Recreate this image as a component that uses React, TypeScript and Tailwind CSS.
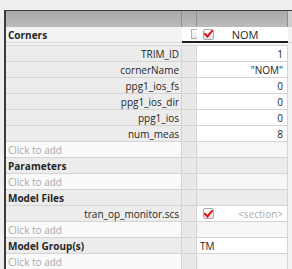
import React from "react";

type Row =
  | { kind: "prop"; label: string; value: string }
  | { kind: "add" }
  | { kind: "section"; label: string }
  | { kind: "file"; label: string }
  | { kind: "group"; label: string; value: string };

const rows: Row[] = [
  { kind: "prop", label: "TRIM_ID", value: "1" },
  { kind: "prop", label: "cornerName", value: "\"NOM\"" },
  { kind: "prop", label: "ppg1_ios_fs", value: "0" },
  { kind: "prop", label: "ppg1_ios_dir", value: "0" },
  { kind: "prop", label: "ppg1_ios", value: "0" },
  { kind: "prop", label: "num_meas", value: "8" },
  { kind: "add" },
  { kind: "section", label: "Parameters" },
  { kind: "add" },
  { kind: "section", label: "Model Files" },
  { kind: "file", label: "tran_op_monitor.scs" },
  { kind: "add" },
  { kind: "group", label: "Model Group(s)", value: "TM" },
  { kind: "add" },
];

function RedCheck() {
  return (
    <span className="flex h-[11px] w-[11px] items-center justify-center rounded-[2px] border border-[#a9a9a9] bg-gradient-to-b from-[#fdfdfd] to-[#e4e4e4]">
      <svg width="9" height="8" viewBox="0 0 9 8">
        <path d="M1 4 L3.5 6.5 L8 1" fill="none" stroke="#d8151b" strokeWidth="2" strokeLinecap="square" />
      </svg>
    </span>
  );
}

const grid = "grid grid-cols-[176px_15px_91px_1fr]";

export default function App() {
  return (
    <div className="h-[269px] w-[292px] overflow-hidden bg-[#efefef] pt-[10px] pl-[4px] text-[10px] leading-none text-[#262626] [font-family:'Open_Sans','Noto_Sans',sans-serif]">
      <div className="border-t border-l-2 border-[#3c3c3c]">
        {/* header */}
        <div className={`${grid} h-[16px] bg-gradient-to-b from-[#a9a9a9] to-[#bcbcbc]`}>
          <div className="border-r border-[#8e8e8e]" />
          <div className="border-r border-[#8e8e8e]" />
          <div className="border-r border-[#8e8e8e]" />
          <div className="bg-[#cfcfcf]" />
        </div>

        {/* Corners row */}
        <div className={`${grid} h-[16px]`}>
          <div className="flex items-center border-b border-[#d6d6d6] bg-[#f3f3f3] pl-[2px] font-bold">Corners</div>
          <div className="flex items-center justify-end border-b-2 border-[#1e1e1e] bg-white">
            <span className="h-[10px] w-[6px] border border-r-0 border-[#b0b0b0] bg-gradient-to-b from-white to-[#e6e6e6]" />
          </div>
          <div className="relative flex items-center border-b-2 border-[#1e1e1e] bg-white pl-[6px]">
            <RedCheck />
            <span className="flex-1 pr-[12px] text-center text-[11px]">NOM</span>
          </div>
          <div className="border-b border-[#d6d6d6] bg-[#f2f2f2]" />
        </div>

        {/* spacer under header */}
        <div className={`${grid} h-[3px]`}>
          <div className="border-b border-[#d6d6d6] bg-[#f4f4f4]" />
          <div className="border-b border-[#d6d6d6] bg-[#f4f4f4]" />
          <div className="border-b border-[#d6d6d6] bg-[#f4f4f4]" />
          <div className="bg-[#f2f2f2]" />
        </div>

        {rows.map((r, i) => {
          const labelBg = r.kind === "add" ? "bg-[#fafafa]" : "bg-[#ececec]";
          const valueBg =
            r.kind === "prop" || r.kind === "file" || r.kind === "group"
              ? "bg-white"
              : r.kind === "add"
              ? "bg-[#f6f6f6]"
              : "bg-[#ececec]";
          return (
            <div key={i} className={`${grid} h-[16px]`}>
              <div
                className={`flex items-center border-r border-b border-[#d4d4d4] ${labelBg} ${
                  r.kind === "prop" || r.kind === "file" ? "justify-end pr-[2px]" : "pl-[2px]"
                } ${r.kind === "section" || r.kind === "group" ? "font-bold" : ""} ${
                  r.kind === "add" ? "text-[#a8a8a8]" : ""
                }`}
              >
                {r.kind === "add" ? "Click to add" : r.label}
              </div>
              <div className="border-r border-b border-[#d4d4d4] bg-[#e9e9e9]" />
              <div className={`flex items-center border-r border-b border-[#d4d4d4] ${valueBg}`}>
                {r.kind === "prop" && <span className="ml-auto pr-[4px]">{r.value}</span>}
                {r.kind === "file" && (
                  <>
                    <span className="pl-[6px]">
                      <RedCheck />
                    </span>
                    <span className="ml-auto pr-[4px] text-[#ababab]">&lt;section&gt;</span>
                  </>
                )}
                {r.kind === "group" && <span className="pl-[3px]">{r.value}</span>}
              </div>
              <div className="bg-[#f2f2f2]" />
            </div>
          );
        })}
      </div>
    </div>
  );
}
